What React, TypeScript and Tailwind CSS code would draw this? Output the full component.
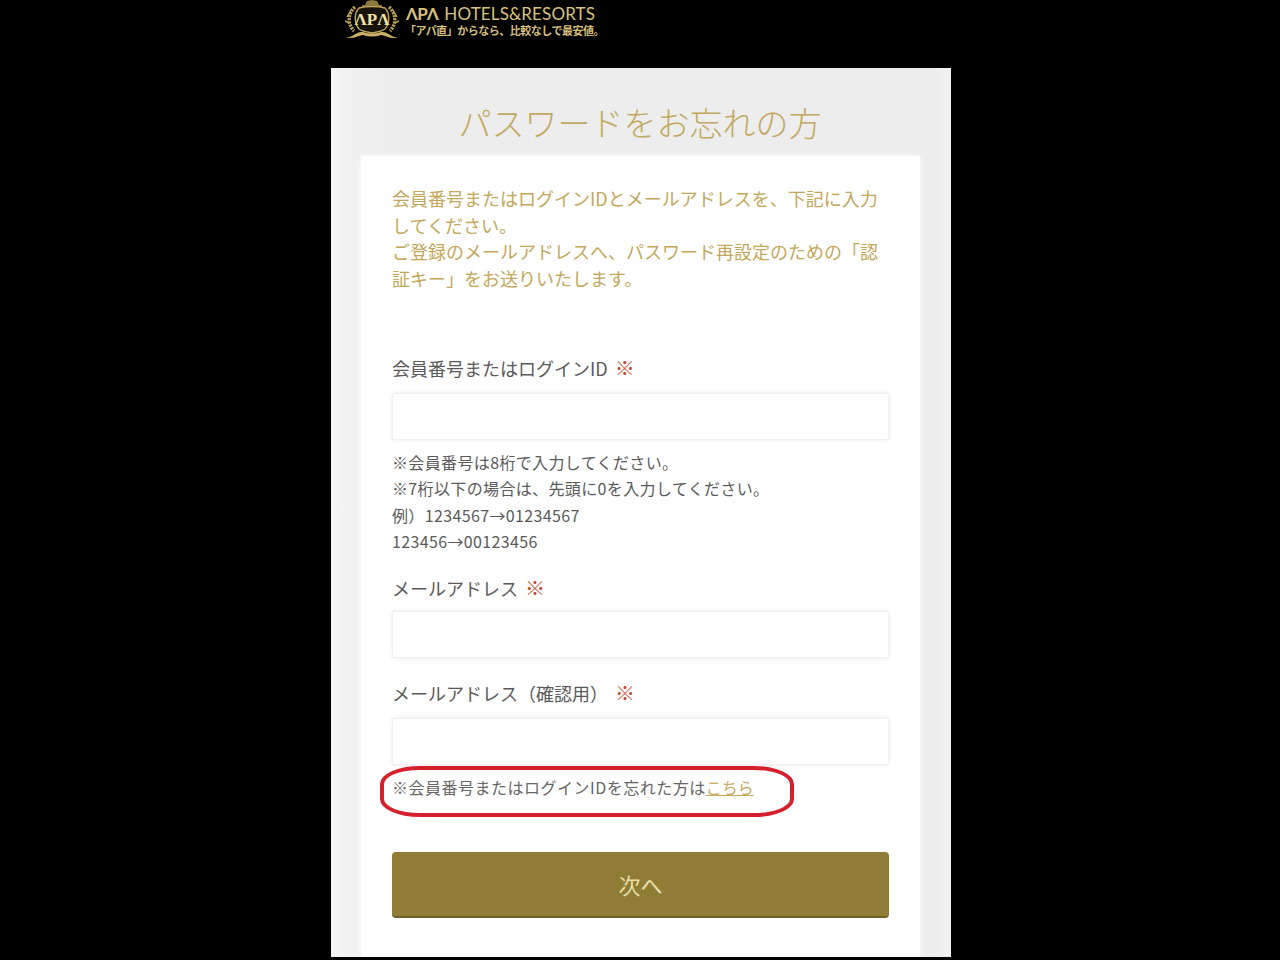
const jp = "font-['Noto_Sans_CJK_JP','Noto_Sans',sans-serif]";

function Crest() {
  return (
    <svg viewBox="0 0 54 40" className="w-[54px] h-[40px] shrink-0" fill="none">
      <path d="M20 5 L22 1 L27 0 L32 1 L34 5 Z" fill="#8f7a3e" />
      <path d="M17 6 H37" stroke="#d8c27a" strokeWidth="1.2" />
      <path d="M14 8 C9 13 9 23 14 29 C18 32 24 32 27 33 C30 32 36 32 40 29 C45 23 45 13 40 8 C33 6 21 6 14 8 Z" fill="#17120a" stroke="#c2a659" strokeWidth="1.4" />
      <path d="M10 7 C3 13 2 24 9 31 M44 7 C51 13 52 24 45 31" stroke="#b89d55" strokeWidth="3.4" strokeDasharray="2.2 1" />
      <path d="M6 10 L2 17 M48 10 L52 17 M4 23 L0 21 M50 23 L54 21" stroke="#c2a659" strokeWidth="1.4" />
      <text x="27" y="25" textAnchor="middle" fontSize="17" fontWeight="700" fill="#f3e2a6" fontFamily="Liberation Serif, serif">ΛPΛ</text>
      <path d="M1 37 C8 38 11 31 18 32 C24 34 30 34 36 32 C43 31 46 38 53 37 C47 40 42 36 36 35 C30 37 24 37 18 35 C12 36 7 40 1 37 Z" fill="#cbb065" />
    </svg>
  );
}

function Required() {
  return <span className="ml-[7px] text-[#c4492c] text-[20px]">※</span>;
}

function Field() {
  return (
    <input
      type="text"
      className="block w-full h-[47px] bg-white rounded-[2px] border border-[#f1f1f1] shadow-[0_0_4px_rgba(0,0,0,0.1)]"
    />
  );
}

export default function App() {
  return (
    <div className={`${jp} w-[1280px] h-[960px] bg-black overflow-hidden`}>
      <div className="ml-[331px] w-[620px] h-[68px] pl-[14px] flex items-start gap-[7px]">
        <Crest />
        <div className="pt-[4px]">
          <div className="flex items-baseline text-[#d9c27e] text-[17px] leading-[20px] tracking-[0.15px] font-['Lato','Noto_Sans',sans-serif] whitespace-nowrap">
            <span className="font-bold mr-[6px] tracking-[-0.6px]">ΛPΛ</span>
            <span>HOTELS&amp;RESORTS</span>
          </div>
          <div className="-ml-[1px] text-[#d6be7c] text-[11px] leading-[13px] font-bold tracking-[-0.5px] whitespace-nowrap">
            「アパ直」からなら、比較なしで最安値。
          </div>
        </div>
      </div>

      <div className="ml-[331px] w-[620px] h-[889px] overflow-hidden px-[30px] bg-[linear-gradient(90deg,#f6f6f6_0%,#f1f1f1_3%,#ededed_9%,#ededed_97%,#f2f2f2_100%)]">
        <h1 className="h-[88px] pt-[32px] pr-[2px] text-center text-[#c2a962] text-[33px] leading-[44px] font-light whitespace-nowrap">
          パスワードをお忘れの方
        </h1>
        <div className="w-[559px] bg-white px-[31px] pt-[29px] pb-[40px] text-[18px] leading-[26.5px] text-[#5a5a5a] shadow-[0_0_6px_rgba(255,255,255,0.9)]">
          <p className="text-[#c4a75a]">
            会員番号またはログインIDとメールアドレスを、下記に入力してください。
            <br />
            ご登録のメールアドレスへ、パスワード再設定のための「認証キー」をお送りいたします。
          </p>

          <label className="block mt-[64px] mb-[11px] whitespace-nowrap">
            会員番号またはログインID
            <Required />
          </label>
          <Field />
          <div className="mt-[9px] text-[16px] tracking-[0.36px]">
            <p>※会員番号は8桁で入力してください。</p>
            <p>※7桁以下の場合は、先頭に0を入力してください。</p>
            <p>例）1234567→01234567</p>
            <p>123456→00123456</p>
          </div>

          <label className="block mt-[20px] mb-[10px] whitespace-nowrap">
            メールアドレス
            <Required />
          </label>
          <Field />

          <label className="block mt-[22px] mb-[11px] whitespace-nowrap">
            メールアドレス（確認用）
            <Required />
          </label>
          <Field />

          <div className="relative mt-[9px] text-[16px] text-[#666] whitespace-nowrap">
            <div className="absolute left-[-12px] top-[-8px] w-[414px] h-[51px] border-[4px] border-[#d7202e] rounded-[40px/18px]" />
            <span className="tracking-[0.5px]">※会員番号またはログインIDを忘れた方は</span>
            <a href="#" className="text-[#c9a961] underline">
              こちら
            </a>
          </div>

          <button className="block w-full h-[66px] mt-[52px] rounded-[4px] bg-[#8f7d35] border-b-[2px] border-[#6f6128] text-[#eadfa8] text-[22px]">
            次へ
          </button>
        </div>
      </div>
    </div>
  );
}
